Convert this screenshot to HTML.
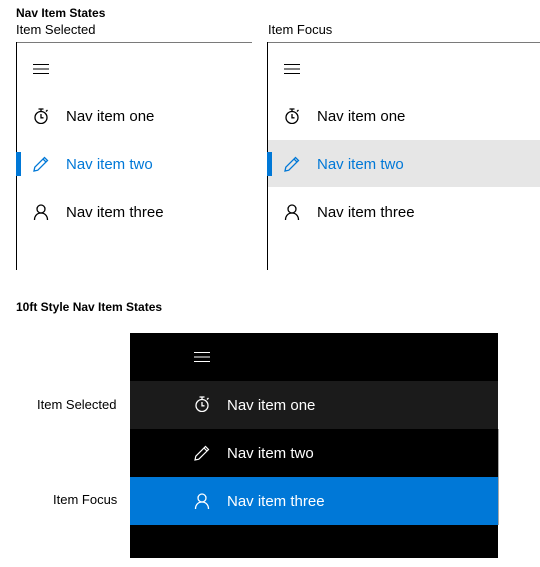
<!DOCTYPE html>
<html><head><meta charset="utf-8"><style>
*{margin:0;padding:0;box-sizing:border-box}
body{width:540px;height:567px;background:#fff;position:relative;overflow:hidden;font-family:"Liberation Sans",sans-serif;color:#000}
.a{position:absolute;white-space:nowrap}
.h{font-weight:bold;font-size:12px}
.l{font-size:13px}
.t{font-size:15px;line-height:20px}
svg.i{position:absolute;width:16px;height:16px}
</style></head><body>
<div class="a h" style="left:16px;top:6px">Nav Item States</div>
<div class="a l" style="left:16px;top:22px">Item Selected</div>
<div class="a l" style="left:268px;top:22px">Item Focus</div>

<div class="a" style="left:16px;top:42px;width:236px;height:1px;background:#7a7a7a"></div>
<div class="a" style="left:16px;top:42px;width:1px;height:228px;background:#000"></div>
<div class="a" style="left:267px;top:42px;width:273px;height:1px;background:#7a7a7a"></div>
<div class="a" style="left:267px;top:42px;width:1px;height:228px;background:#000"></div>
<div class="a" style="left:268px;top:140px;width:272px;height:47px;background:#e6e6e6"></div>

<div class="a" style="left:16px;top:152px;width:5px;height:24px;background:#0078d7"></div>
<div class="a" style="left:267px;top:152px;width:5px;height:24px;background:#0078d7"></div>

<svg class="i" style="left:33px;top:61px" viewBox="0 0 16 16"><path d="M0 3.5H16M0 8H16M0 12.5H16" stroke="#000" stroke-width="1"/></svg>
<svg class="i" style="left:284px;top:61px" viewBox="0 0 16 16"><path d="M0 3.5H16M0 8H16M0 12.5H16" stroke="#000" stroke-width="1"/></svg>

<svg class="i" style="left:33px;top:108px" viewBox="0 0 16 16" fill="none" stroke="#000" stroke-width="1.3"><circle cx="8" cy="9.5" r="6"/><path d="M5.5 1H10.5M8 1V3.5M8 6V9.8H10.5M13 3.5L14.5 2"/></svg>
<div class="a t" style="left:66px;top:107px">Nav item one</div>
<svg class="i" style="left:33px;top:156px" viewBox="0 0 16 16" fill="none" stroke="#0078d7" stroke-width="1.3"><path d="M1 15L1.8 11.2L11.5 1.5L14.5 4.5L4.8 14.2Z M10 3L13 6"/></svg>
<div class="a t" style="left:66px;top:155px;color:#0078d7">Nav item two</div>
<svg class="i" style="left:33px;top:204px" viewBox="0 0 16 16" fill="none" stroke="#000" stroke-width="1.3"><circle cx="8" cy="5" r="4"/><path d="M1.5 16C1.5 11.5 4.5 9 8 9S14.5 11.5 14.5 16"/></svg>
<div class="a t" style="left:66px;top:203px">Nav item three</div>

<svg class="i" style="left:284px;top:108px" viewBox="0 0 16 16" fill="none" stroke="#000" stroke-width="1.3"><circle cx="8" cy="9.5" r="6"/><path d="M5.5 1H10.5M8 1V3.5M8 6V9.8H10.5M13 3.5L14.5 2"/></svg>
<div class="a t" style="left:317px;top:107px">Nav item one</div>
<svg class="i" style="left:284px;top:156px" viewBox="0 0 16 16" fill="none" stroke="#0078d7" stroke-width="1.3"><path d="M1 15L1.8 11.2L11.5 1.5L14.5 4.5L4.8 14.2Z M10 3L13 6"/></svg>
<div class="a t" style="left:317px;top:155px;color:#0078d7">Nav item two</div>
<svg class="i" style="left:284px;top:204px" viewBox="0 0 16 16" fill="none" stroke="#000" stroke-width="1.3"><circle cx="8" cy="5" r="4"/><path d="M1.5 16C1.5 11.5 4.5 9 8 9S14.5 11.5 14.5 16"/></svg>
<div class="a t" style="left:317px;top:203px">Nav item three</div>

<div class="a h" style="left:16px;top:300px">10ft Style Nav Item States</div>
<div class="a l" style="left:37px;top:397px">Item Selected</div>
<div class="a l" style="left:53px;top:492px">Item Focus</div>

<div class="a" style="left:130px;top:333px;width:368px;height:225px;background:#000"></div>
<div class="a" style="left:130px;top:381px;width:368px;height:48px;background:#1b1b1b"></div>
<div class="a" style="left:130px;top:477px;width:368px;height:48px;background:#0078d7"></div>
<div class="a" style="left:498px;top:429px;width:1px;height:96px;background:#aaa"></div>

<svg class="i" style="left:194px;top:349px" viewBox="0 0 16 16"><path d="M0 3.5H16M0 8H16M0 12.5H16" stroke="#fff" stroke-width="1"/></svg>
<svg class="i" style="left:194px;top:396px" viewBox="0 0 16 16" fill="none" stroke="#fff" stroke-width="1.3"><circle cx="8" cy="9.5" r="6"/><path d="M5.5 1H10.5M8 1V3.5M8 6V9.8H10.5M13 3.5L14.5 2"/></svg>
<div class="a t" style="left:227px;top:396px;color:#fff">Nav item one</div>
<svg class="i" style="left:194px;top:445px" viewBox="0 0 16 16" fill="none" stroke="#fff" stroke-width="1.2"><path d="M1 15L1.8 11.2L11.5 1.5L14.5 4.5L4.8 14.2Z M10 3L13 6"/></svg>
<div class="a t" style="left:227px;top:444px;color:#fff">Nav item two</div>
<svg class="i" style="left:194px;top:493px" viewBox="0 0 16 16" fill="none" stroke="#fff" stroke-width="1.3"><circle cx="8" cy="5" r="4"/><path d="M1.5 16C1.5 11.5 4.5 9 8 9S14.5 11.5 14.5 16"/></svg>
<div class="a t" style="left:227px;top:492px;color:#fff">Nav item three</div>
</body></html>
